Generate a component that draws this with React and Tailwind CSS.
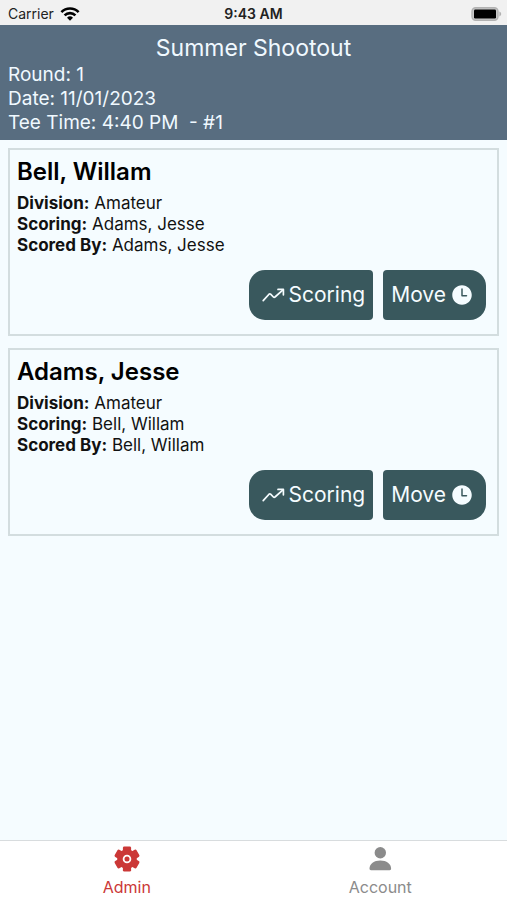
import { IoTime } from 'react-icons/io5';

const event = {
  name: 'Summer Shootout',
  round: '1',
  date: '11/01/2023',
  teeTime: '4:40 PM',
  hole: '#1',
};

const players = [
  { name: 'Bell, Willam', division: 'Amateur', scoring: 'Adams, Jesse', scoredBy: 'Adams, Jesse' },
  { name: 'Adams, Jesse', division: 'Amateur', scoring: 'Bell, Willam', scoredBy: 'Bell, Willam' },
];

const tabs = [
  { label: 'Admin', icon: GearIcon, color: 'text-[#cb3837]', active: true },
  { label: 'Account', icon: PersonIcon, color: 'text-[#8b8b8b]', active: false },
];

function WifiIcon() {
  return (
    <svg aria-hidden="true" className="h-3.5 w-5" viewBox="0 0 20 14" fill="none" stroke="#000" strokeWidth="2.6">
      <path d="M1.4 5.1a12.1 12.1 0 0 1 17.2 0" />
      <path d="M4.6 8.4a7.6 7.6 0 0 1 10.8 0" />
      <path d="M10 13.8 7 10.7a4.3 4.3 0 0 1 6 0z" fill="#000" stroke="none" />
    </svg>
  );
}

function BatteryIcon() {
  return (
    <svg aria-hidden="true" className="h-3.5 w-8" viewBox="0 0 32 14">
      <rect x="1" y="0.8" width="26" height="12.4" rx="3.6" fill="#c9c9c9" stroke="#b2b2b2" strokeWidth="1.4" />
      <rect x="3" y="2.6" width="22" height="8.8" rx="1.2" fill="#000" />
      <path d="M28.4 4.6c2.4.8 2.4 4 0 4.8z" fill="#b2b2b2" />
    </svg>
  );
}

function GearIcon({ className }) {
  return (
    <svg aria-hidden="true" className={className} viewBox="0 0 28 28" fill="currentColor">
      <rect x="9.9" y="1.4" width="8.2" height="25.2" rx="1.4" />
      <rect x="9.9" y="1.4" width="8.2" height="25.2" rx="1.4" transform="rotate(60 14 14)" />
      <rect x="9.9" y="1.4" width="8.2" height="25.2" rx="1.4" transform="rotate(120 14 14)" />
      <circle cx="14" cy="14" r="9.8" />
      <circle cx="14" cy="14" r="3.4" stroke="#fff" strokeWidth="1.8" />
    </svg>
  );
}

function PersonIcon({ className }) {
  return (
    <svg aria-hidden="true" className={className} viewBox="0 0 28 28" fill="currentColor">
      <circle cx="14.3" cy="7.8" r="5.7" />
      <path d="M3.5 23.6c0-5 4.6-8.2 10.8-8.2s10.8 3.2 10.8 8.2c0 1.1-.5 1.6-1.5 1.6H5c-1 0-1.5-.5-1.5-1.6z" />
    </svg>
  );
}

function TrendIcon({ className }) {
  return (
    <svg
      aria-hidden="true"
      className={className}
      viewBox="0 0 24 24"
      fill="none"
      stroke="currentColor"
      strokeWidth="1.7"
      strokeLinecap="round"
      strokeLinejoin="round"
    >
      <path d="M2.2 17.6 8 11.2q.8-.8 1.6 0L12.4 14q.8.8 1.6 0L22 6.8" />
      <path d="M17 6.4h5.4v5.4" />
    </svg>
  );
}

function StatusBar() {
  return (
    <div className="grid h-[25px] grid-cols-3 items-center bg-[#f1f1f1] px-2 pt-0.5 text-sm text-[#222]">
      <div className="flex items-center gap-1.5">
        <span>Carrier</span>
        <WifiIcon />
      </div>
      <span className="text-center font-semibold">9:43 AM</span>
      <div className="-mr-1 flex justify-end">
        <BatteryIcon />
      </div>
    </div>
  );
}

function EventHeader() {
  return (
    <header className="bg-[#586d80] px-2 pb-[5px] pt-2 text-[#f0f9ff]">
      <h1 className="text-center text-[23px] leading-[30px]">{event.name}</h1>
      <div className="text-[19px] leading-6">
        <p>Round: {event.round}</p>
        <p>Date: {event.date}</p>
        <p className="whitespace-pre">{`Tee Time: ${event.teeTime}  - ${event.hole}`}</p>
      </div>
    </header>
  );
}

function PlayerCard({ player }) {
  return (
    <article className="border-2 border-[#d3dddf] px-[7px] pb-3.5 pt-1.5">
      <h2 className="text-2xl font-semibold leading-8 text-black">{player.name}</h2>
      <div className="mt-[5px] text-[17px] leading-[21px] text-[#111]">
        <p><b>Division:</b> {player.division}</p>
        <p><b>Scoring:</b> {player.scoring}</p>
        <p><b>Scored By:</b> {player.scoredBy}</p>
      </div>
      <div className="mt-3.5 flex justify-end gap-2.5 pr-1 text-[21px] text-[#f5fcff]">
        <button
          type="button"
          className="flex h-[50px] items-center gap-1 rounded-l-2xl rounded-r-sm bg-[#39585d] pl-3 pr-2"
        >
          <TrendIcon className="h-6 w-6" />
          Scoring
        </button>
        <button
          type="button"
          className="flex h-[50px] items-center gap-1 rounded-l-sm rounded-r-2xl bg-[#39585d] pl-2 pr-3"
        >
          Move
          <IoTime aria-hidden="true" className="h-6 w-6" />
        </button>
      </div>
    </article>
  );
}

function TabBar() {
  return (
    <nav className="grid h-[60px] grid-cols-2 border-t border-[#d8dcde] bg-white">
      {tabs.map(({ label, icon: Icon, color, active }) => (
        <a
          key={label}
          href={`#${label.toLowerCase()}`}
          aria-current={active ? 'page' : undefined}
          className={`flex flex-col items-center gap-0.5 pt-1 text-base leading-6 ${color}`}
        >
          <Icon className="h-7 w-7" />
          {label}
        </a>
      ))}
    </nav>
  );
}

function App() {
  return (
    <div className="flex min-h-screen flex-col bg-[#f5fcff] font-['Inter',sans-serif]">
      <StatusBar />
      <EventHeader />
      <main className="flex flex-1 flex-col gap-3 p-2">
        {players.map((player) => (
          <PlayerCard key={player.name} player={player} />
        ))}
      </main>
      <TabBar />
    </div>
  );
}

export default App;
